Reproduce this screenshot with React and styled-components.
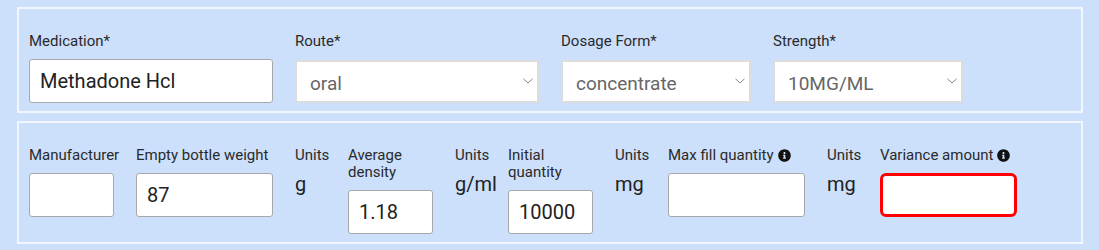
import styled, { createGlobalStyle } from "styled-components";
import { FaInfoCircle } from "react-icons/fa";

const GlobalStyle = createGlobalStyle`
  body {
    margin: 0;
    background: #cce0fc;
    font-family: Roboto, "Liberation Sans", sans-serif;
  }
`;

const Page = styled.div`
  padding: 7px 16px 0 17px;
  display: flex;
  flex-direction: column;
  gap: 8px;
`;

const Panel = styled.div`
  border: 2px solid #f2f7ff;
  padding: ${(p) => p.$top}px 10px 8px 10px;
`;

const Row = styled.div`
  display: flex;
  align-items: flex-start;
  gap: 22px;
`;

const Field = styled.div`
  width: ${(p) => p.$width}px;
  flex: none;
  display: flex;
  flex-direction: column;
`;

const Label = styled.label`
  font-size: 15px;
  line-height: 17px;
  color: #2a2a2a;
  margin-bottom: ${(p) => p.$gap || 9}px;
  white-space: ${(p) => (p.$nowrap ? "nowrap" : "normal")};
  display: flex;
  align-items: center;
  gap: 4px;
  svg {
    width: 13px;
    height: 13px;
    color: #111;
  }
`;

const TextInput = styled.input`
  box-sizing: border-box;
  width: 100%;
  height: 44px;
  margin: 0;
  padding: 0 10px;
  border: ${(p) => (p.$invalid ? "3px solid #f00" : "1px solid #a8a8a8")};
  border-radius: ${(p) => (p.$invalid ? 6 : 3)}px;
  background: #fff;
  font-family: inherit;
  font-size: 20px;
  color: #222;
  outline: none;
`;

const SelectWrap = styled.div`
  position: relative;
  width: 100%;
  height: 43px;
  svg {
    position: absolute;
    right: 6px;
    top: 18px;
    pointer-events: none;
  }
`;

const Select = styled.select`
  box-sizing: border-box;
  appearance: none;
  width: 100%;
  height: 100%;
  margin: 0;
  padding: 3px 30px 0 13px;
  border: 2px solid #dcdcdc;
  border-radius: 0;
  background: #fff;
  font-family: inherit;
  font-size: 19px;
  color: #666;
  outline: none;
`;

const UnitValue = styled.div`
  font-size: 20px;
  line-height: 22px;
  color: #222;
  white-space: nowrap;
`;

const Chevron = () => (
  <svg width="10" height="6" viewBox="0 0 10 6" fill="none">
    <path d="M0.5 0.8 L5 5 L9.5 0.8" stroke="#888" strokeWidth="1" />
  </svg>
);

const SelectField = ({ label, value, width }) => (
  <Field $width={width}>
    <Label $gap={10}>{label}</Label>
    <SelectWrap>
      <Select defaultValue={value}>
        <option value={value}>{value}</option>
      </Select>
      <Chevron />
    </SelectWrap>
  </Field>
);

const InputField = ({ label, value, width, info, invalid }) => (
  <Field $width={width}>
    <Label $nowrap={label === "Manufacturer"}>
      {label}
      {info && <FaInfoCircle />}
    </Label>
    <TextInput defaultValue={value} $invalid={invalid} />
  </Field>
);

const UnitField = ({ value }) => (
  <Field $width={31}>
    <Label $nowrap>Units</Label>
    <UnitValue>{value}</UnitValue>
  </Field>
);

export default function App() {
  return (
    <>
      <GlobalStyle />
      <Page>
        <Panel $top={24}>
          <Row>
            <Field $width={244}>
              <Label $gap={9}>Medication*</Label>
              <TextInput defaultValue="Methadone Hcl" />
            </Field>
            <SelectField label="Route*" value="oral" width={244} />
            <SelectField label="Dosage Form*" value="concentrate" width={190} />
            <SelectField label="Strength*" value="10MG/ML" width={190} />
          </Row>
        </Panel>
        <Panel $top={24}>
          <Row>
            <InputField label="Manufacturer" value="" width={85} />
            <InputField label="Empty bottle weight" value="87" width={137} />
            <UnitField value="g" />
            <InputField label="Average density" value="1.18" width={85} />
            <UnitField value="g/ml" />
            <InputField label="Initial quantity" value="10000" width={85} />
            <UnitField value="mg" />
            <InputField label="Max fill quantity" value="" width={137} info />
            <UnitField value="mg" />
            <InputField label="Variance amount" value="" width={137} info invalid />
          </Row>
        </Panel>
      </Page>
    </>
  );
}
